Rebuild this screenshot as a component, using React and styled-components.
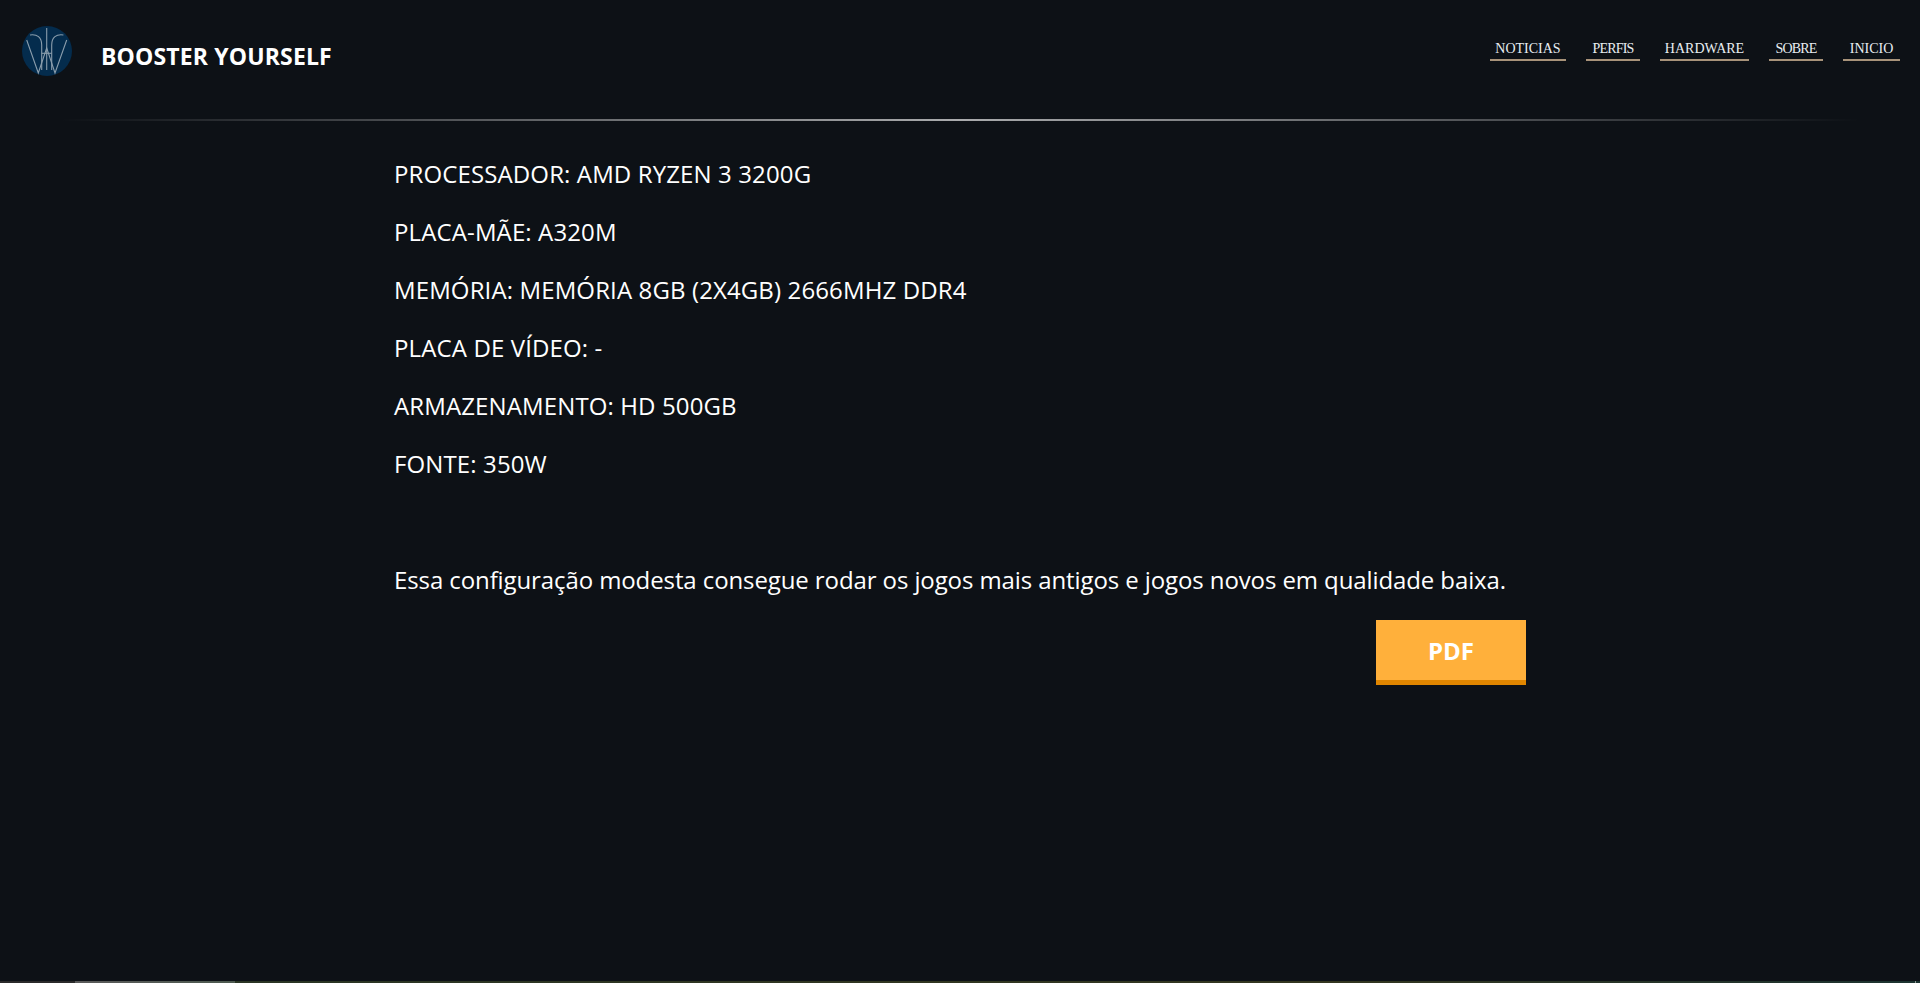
import React from 'react';
import styled, { createGlobalStyle } from 'styled-components';

const GlobalStyle = createGlobalStyle`
  html, body {
    margin: 0;
    padding: 0;
    background-color: #0d1116;
  }
  body {
    font-family: "Open Sans", "Noto Sans", sans-serif;
    color: #fff;
  }
`;

const Page = styled.div`
  display: flex;
  flex-direction: column;
  height: 983px;
  overflow: hidden;
`;

const Header = styled.header`
  display: flex;
  justify-content: space-between;
  align-items: flex-start;
  height: 119px;
  flex-shrink: 0;
  padding: 0 20px 0 22px;
  box-sizing: border-box;
`;

const Brand = styled.div`
  display: flex;
  align-items: center;
  gap: 29px;
  padding-top: 26px;
`;

const Logo = styled.svg`
  width: 50px;
  height: 50px;
  display: block;
`;

const BrandName = styled.span`
  font-size: 23px;
  font-weight: 700;
  letter-spacing: 0.15px;
  margin-top: 10px;
`;

const Nav = styled.nav`
  display: flex;
  gap: 20px;
  padding-top: 39px;
`;

const NavLink = styled.a`
  display: block;
  box-sizing: content-box;
  width: ${(p) => p.$width}px;
  height: 20px;
  font-family: "Liberation Serif", serif;
  font-size: 14px;
  line-height: 20px;
  letter-spacing: ${(p) => p.$track || 0}px;
  color: #e8edf2;
  border-bottom: 2px solid #a8937a;
  text-align: center;
  white-space: nowrap;
`;

const Divider = styled.hr`
  border: 0;
  height: 2px;
  margin: 0 60px;
  flex-shrink: 0;
  background-image: linear-gradient(to right, rgba(255, 255, 255, 0), rgba(255, 255, 255, 0.65), rgba(255, 255, 255, 0));
`;

const Content = styled.main`
  flex: 1;
  width: 1132px;
  margin-left: 394px;
  padding-top: 36px;
`;

const Spec = styled.p`
  font-size: 24px;
  line-height: 34px;
  letter-spacing: 0.12px;
  margin: 0 0 24px;
`;

const Summary = styled.p`
  font-size: 24px;
  line-height: 34px;
  letter-spacing: -0.1px;
  margin: 82px 0 23px;
  white-space: nowrap;
`;

const Actions = styled.div`
  display: flex;
  justify-content: flex-end;
`;

const PdfButton = styled.button`
  width: 150px;
  height: 65px;
  border: 0;
  border-bottom: 5px solid #e08600;
  background-color: #ffb03b;
  color: #fff;
  font-family: inherit;
  font-size: 24px;
  font-weight: 700;
  padding: 0;
`;

const BottomBar = styled.div`
  display: flex;
  height: 2px;
  flex-shrink: 0;
`;

const BarPart = styled.div`
  width: ${(p) => p.$width};
  flex: ${(p) => (p.$width ? 'none' : 1)};
  background: ${(p) => p.$bg};
`;

const specs = [
  'PROCESSADOR: AMD RYZEN 3 3200G',
  'PLACA-MÃE: A320M',
  'MEMÓRIA: MEMÓRIA 8GB (2X4GB) 2666MHZ DDR4',
  'PLACA DE VÍDEO: -',
  'ARMAZENAMENTO: HD 500GB',
  'FONTE: 350W',
];

const links = [
  { label: 'NOTICIAS', width: 76 },
  { label: 'PERFIS', width: 54, track: -0.8 },
  { label: 'HARDWARE', width: 89 },
  { label: 'SOBRE', width: 54, track: -0.8 },
  { label: 'INICIO', width: 57 },
];

const App = () => (
  <Page>
    <GlobalStyle />
    <Header>
      <Brand>
        <Logo viewBox="0 0 50 50">
          <circle cx="25" cy="25" r="25" fill="#042c4d" />
          <g fill="none" stroke="#8a9dac" strokeWidth="1.1">
            <path d="M24.7 2V44" />
            <path d="M4.7 14L16.3 47L24.7 22L33 47L44.7 14" />
            <path d="M8 9C15 8 19.7 11 19.7 19V44" />
            <path d="M41.4 9C34.4 8 29.7 11 29.7 19V44" />
            <path d="M19.7 27.3H29.7" />
          </g>
        </Logo>
        <BrandName>BOOSTER YOURSELF</BrandName>
      </Brand>
      <Nav>
        {links.map((link) => (
          <NavLink key={link.label} $width={link.width} $track={link.track}>{link.label}</NavLink>
        ))}
      </Nav>
    </Header>
    <Divider />
    <Content>
      {specs.map((spec) => (
        <Spec key={spec}>{spec}</Spec>
      ))}
      <Summary>Essa configuração modesta consegue rodar os jogos mais antigos e jogos novos em qualidade baixa.</Summary>
      <Actions>
        <PdfButton>PDF</PdfButton>
      </Actions>
    </Content>
    <BottomBar>
      <BarPart $width="75px" $bg="#2a2a2a" />
      <BarPart $width="160px" $bg="linear-gradient(to right, #5a5a5a, #4d5a50)" />
      <BarPart $bg="linear-gradient(to right, #2a3524, #33361f 65%, #1c3330)" />
      <BarPart $width="1px" $bg="#8a9590" />
      <BarPart $width="4px" $bg="#1c3330" />
    </BottomBar>
  </Page>
);

export default App;
